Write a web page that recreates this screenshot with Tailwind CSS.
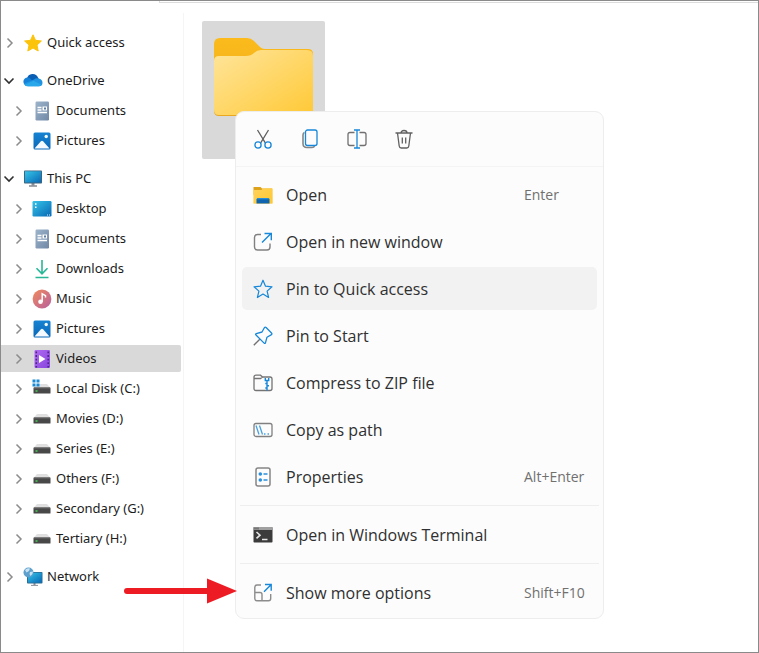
<!DOCTYPE html>
<html lang="en">
<head>
    <meta charset="utf-8">
    <meta name="viewport" content="width=device-width, initial-scale=1">
    <title>Videos</title>
    <script src="https://cdn.jsdelivr.net/npm/@tailwindcss/browser@4"></script>
</head>
<body class="bg-white font-['Open_Sans',sans-serif]">

<!-- shared icons -->
<svg class="absolute size-0">
    <defs>
        <linearGradient id="g-doc" x1="0" y1="0" x2="1" y2="1"><stop offset="0" stop-color="#9db4cb"/><stop offset="1" stop-color="#7088a6"/></linearGradient>
        <linearGradient id="g-pic" x1="0" y1="0" x2="0" y2="1"><stop offset="0" stop-color="#1683d2"/><stop offset="1" stop-color="#0a68b8"/></linearGradient>
        <linearGradient id="g-screen" x1="0" y1="0" x2="1" y2="1"><stop offset="0" stop-color="#35c5e8"/><stop offset="1" stop-color="#0868b5"/></linearGradient>
        <linearGradient id="g-music" x1="0" y1="0" x2="1" y2="1"><stop offset="0" stop-color="#f08a5c"/><stop offset="1" stop-color="#b8609f"/></linearGradient>
        <linearGradient id="g-video" x1="0" y1="0" x2="1" y2="1"><stop offset="0" stop-color="#b06af0"/><stop offset="1" stop-color="#8746dd"/></linearGradient>
        <linearGradient id="g-folder" x1="0" y1="0" x2="1" y2="1"><stop offset="0" stop-color="#ffe59b"/><stop offset="1" stop-color="#ffc936"/></linearGradient>
        <linearGradient id="g-tab" x1="0" y1="0" x2="0" y2="1"><stop offset="0" stop-color="#fcbb1b"/><stop offset=".7" stop-color="#efae1e"/><stop offset="1" stop-color="#e9a820"/></linearGradient>
    </defs>
    <symbol id="right" viewBox="0 0 18 18"><path d="M6.500 4.500l4.500 4.500-4.500 4.500" fill="none" stroke="#8c8c8c" stroke-width="1.500"/></symbol>
    <symbol id="down" viewBox="0 0 18 18"><path d="M3.500 6.500l4.500 4.500 4.500-4.500" fill="none" stroke="#303030" stroke-width="1.600"/></symbol>
    <symbol id="doc" viewBox="0 0 20 20">
        <rect x="3.500" y=".5" width="13.500" height="19" rx="1.200" fill="url(#g-doc)"/>
        <path d="M5.500 6.500h4M5.500 9h4M5.500 11.500h9.500" stroke="#fff" stroke-width="1.300"/>
        <rect x="10.500" y="5.500" width="4.500" height="4" fill="#fff"/><rect x="12" y="6.500" width="2" height="2" fill="#5f7d9d"/>
    </symbol>
    <symbol id="pic" viewBox="0 0 20 20">
        <rect x="1.500" y="1.500" width="17" height="17" rx="1.500" fill="url(#g-pic)"/>
        <path d="M2.500 17.500l6.200-7q1.300-1.400 2.600 0l6.200 7z" fill="#f4faff"/>
        <circle cx="14.200" cy="5.500" r="1.700" fill="#f4faff"/>
    </symbol>
    <symbol id="drive" viewBox="0 0 20 20">
        <path d="M5 5h10l3.500 4h-17z" fill="#e0e0e0"/>
        <rect x="1.500" y="8.500" width="17" height="6" rx=".5" fill="#484848"/>
        <path d="M2 9h16" stroke="#686868"/>
        <path d="M3.500 12h2" stroke="#47d052" stroke-width="1.500"/>
    </symbol>
</svg>

<div class="relative flex min-h-screen border border-[#8a8a8a]">
    <!-- edge of the address bar -->
    <div class="absolute top-0 right-0 left-[158px] h-[2px] border-b border-l border-[#dcdcdc]"></div>

    <nav class="w-[180px] shrink-0 pt-7 font-['Noto_Sans',sans-serif] text-[13px] text-[#1c1c1c]">
        <ul class="flex flex-col gap-[11px]">
            <li>
                <a href="#" class="flex h-[27px] items-center gap-1">
                    <svg class="size-[18px]"><use href="#right"/></svg>
                    <svg class="size-5" viewBox="0 0 20 20"><path d="M10 1.800l2.500 5.500 5.900.7-4.400 4 1.200 6-5.200-3-5.200 3L6 12 1.600 8l5.900-.7z" fill="#fcc30b" stroke="#fcc30b" stroke-linejoin="round"/></svg>
                    <span>Quick access</span>
                </a>
            </li>
            <li class="flex flex-col gap-[3px]">
                <a href="#" class="flex h-[27px] items-center gap-1">
                    <svg class="size-[18px]"><use href="#down"/></svg>
                    <svg class="size-5" viewBox="0 0 20 20">
                        <path d="M4 7.500A5.800 5.800 0 0 1 15 6.500l1.500 3L8 13 2 9z" fill="#0a5fb5"/>
                        <circle cx="4.600" cy="10.800" r="4.200" fill="#1480d8"/>
                        <path d="M11 8.500q2-2 4.500-1 4 .8 4 4.200 0 3.500-3.500 3.500H5q-3 0-4-2.700z" fill="#1f93e0"/>
                        <path d="M1.700 13.700L10.500 9.800l8 4q-.8 1.400-2.500 1.400H5q-2 0-3.300-1.500z" fill="#28a8ea"/>
                    </svg>
                    <span>OneDrive</span>
                </a>
                <ul class="flex flex-col gap-[3px]">
                    <li><a href="#" class="flex h-[27px] items-center gap-1 pl-[9px]"><svg class="size-[18px]"><use href="#right"/></svg><svg class="size-5"><use href="#doc"/></svg><span>Documents</span></a></li>
                    <li><a href="#" class="flex h-[27px] items-center gap-1 pl-[9px]"><svg class="size-[18px]"><use href="#right"/></svg><svg class="size-5"><use href="#pic"/></svg><span>Pictures</span></a></li>
                </ul>
            </li>
            <li class="flex flex-col gap-[3px]">
                <a href="#" class="flex h-[27px] items-center gap-1">
                    <svg class="size-[18px]"><use href="#down"/></svg>
                    <svg class="size-5" viewBox="0 0 20 20">
                        <path d="M8.500 14h3v2.500h-3z" fill="#8a9199"/><path d="M6 17h8" stroke="#6f7780" stroke-width="1.300"/>
                        <rect x="1" y="1.500" width="18" height="13" rx=".8" fill="#3d6480"/><rect x="2" y="2.300" width="16" height="11.200" fill="url(#g-screen)"/>
                    </svg>
                    <span>This PC</span>
                </a>
                <ul class="flex flex-col gap-[3px]">
                    <li><a href="#" class="flex h-[27px] items-center gap-1 pl-[9px]">
                        <svg class="size-[18px]"><use href="#right"/></svg>
                        <svg class="size-5" viewBox="0 0 20 20"><rect x=".5" y="2" width="19" height="15.500" rx="1.200" fill="url(#g-screen)"/><path d="M3 5h1.500M3 8.300h1.500" stroke="#fff" stroke-width="1.500"/><path d="M15 16h1m1 0h1" stroke="#d7efff"/></svg>
                        <span>Desktop</span></a></li>
                    <li><a href="#" class="flex h-[27px] items-center gap-1 pl-[9px]"><svg class="size-[18px]"><use href="#right"/></svg><svg class="size-5"><use href="#doc"/></svg><span>Documents</span></a></li>
                    <li><a href="#" class="flex h-[27px] items-center gap-1 pl-[9px]">
                        <svg class="size-[18px]"><use href="#right"/></svg>
                        <svg class="size-5" viewBox="0 0 20 20" fill="none" stroke="#27b797" stroke-width="1.600"><path d="M10 1v13.500M4.500 9.300l5.500 5.500 5.500-5.500M3.500 18.500h13"/></svg>
                        <span>Downloads</span></a></li>
                    <li><a href="#" class="flex h-[27px] items-center gap-1 pl-[9px]">
                        <svg class="size-[18px]"><use href="#right"/></svg>
                        <svg class="size-5" viewBox="0 0 20 20"><circle cx="10" cy="10" r="9.400" fill="url(#g-music)"/><circle cx="8.500" cy="12.800" r="2.300" fill="#fff"/><path d="M10.200 13V4.800l3.300 1.800v2" fill="none" stroke="#fff" stroke-width="1.500"/></svg>
                        <span>Music</span></a></li>
                    <li><a href="#" class="flex h-[27px] items-center gap-1 pl-[9px]"><svg class="size-[18px]"><use href="#right"/></svg><svg class="size-5"><use href="#pic"/></svg><span>Pictures</span></a></li>
                    <li><a href="#" aria-current="page" class="flex h-[27px] items-center gap-1 rounded-r-[2px] bg-[#d9d9d9] pl-[9px]">
                        <svg class="size-[18px]"><use href="#right"/></svg>
                        <svg class="size-5" viewBox="0 0 20 20"><rect x="2.500" y="1" width="15.500" height="18" rx="1.200" fill="url(#g-video)"/><path d="M4.300 2.500v16M16.200 2.500v16" stroke="#4b2484" stroke-width="1.500" stroke-dasharray="1.800 1.800"/><path d="M7 6v8l6.500-4z" fill="#fff"/></svg>
                        <span>Videos</span></a></li>
                    <li><a href="#" class="flex h-[27px] items-center gap-1 pl-[9px]">
                        <svg class="size-[18px]"><use href="#right"/></svg>
                        <svg class="size-5" viewBox="0 0 20 20"><use href="#drive"/><path d="M.5.500h3v3h-3zM4.500.500h3v3h-3zM.5 4.500h3v3h-3zM4.500 4.500h3v3h-3z" fill="#1b8ad6"/></svg>
                        <span>Local Disk (C:)</span></a></li>
                    <li><a href="#" class="flex h-[27px] items-center gap-1 pl-[9px]"><svg class="size-[18px]"><use href="#right"/></svg><svg class="size-5"><use href="#drive"/></svg><span>Movies (D:)</span></a></li>
                    <li><a href="#" class="flex h-[27px] items-center gap-1 pl-[9px]"><svg class="size-[18px]"><use href="#right"/></svg><svg class="size-5"><use href="#drive"/></svg><span>Series (E:)</span></a></li>
                    <li><a href="#" class="flex h-[27px] items-center gap-1 pl-[9px]"><svg class="size-[18px]"><use href="#right"/></svg><svg class="size-5"><use href="#drive"/></svg><span>Others (F:)</span></a></li>
                    <li><a href="#" class="flex h-[27px] items-center gap-1 pl-[9px]"><svg class="size-[18px]"><use href="#right"/></svg><svg class="size-5"><use href="#drive"/></svg><span>Secondary (G:)</span></a></li>
                    <li><a href="#" class="flex h-[27px] items-center gap-1 pl-[9px]"><svg class="size-[18px]"><use href="#right"/></svg><svg class="size-5"><use href="#drive"/></svg><span>Tertiary (H:)</span></a></li>
                </ul>
            </li>
            <li>
                <a href="#" class="flex h-[27px] items-center gap-1">
                    <svg class="size-[18px]"><use href="#right"/></svg>
                    <svg class="size-5" viewBox="0 0 20 20">
                        <path d="M10.500 16h2v2h-2z" fill="#8a9199"/><path d="M8 18.400h7" stroke="#8a9199"/>
                        <rect x="4" y="5" width="15.500" height="11.500" rx=".8" fill="#2c6d94"/><rect x="5" y="5.800" width="13.700" height="9.800" fill="url(#g-screen)"/>
                        <circle cx="5.500" cy="5.500" r="5" fill="#5d9fcd"/><path d="M2 3q2-2.500 5-1.500L6 4 3.500 5.500zM7 5l3-.5q0 3-2.500 4.500L6.500 7z" fill="#c8e2f2"/>
                    </svg>
                    <span>Network</span>
                </a>
            </li>
        </ul>
    </nav>

    <main class="relative mt-3 ml-[2px] flex-1 border-l border-[#f5f5f5] pt-2 pl-[18px]">
        <button type="button" aria-label="Folder" class="flex h-[138px] w-[123px] justify-center rounded-[2px] bg-[#d9d9d9] pt-4">
            <svg class="h-[80px] w-[101px]" viewBox="0 0 101 80">
                <path d="M1 7q0-6 6-6h27q4 0 7 3l6 6q2 2 5 2h43q5 0 5 5v57q0 5-5 5H6q-5 0-5-5z" fill="url(#g-tab)"/>
                <path d="M1 24q0-5 5-5h27q5 0 8-3 3-3 7-3h46q6 0 6 6v54q0 5-5 5H6q-5 0-5-5z" fill="url(#g-folder)"/>
            </svg>
        </button>

        <!-- context menu -->
        <div role="menu" class="absolute top-[98px] left-[51px] w-[369px] rounded-[9px] border border-[#ededed] bg-[#fcfcfc] pb-1 text-base text-[#303030]">
            <div class="flex h-[55px] items-center gap-[6px] border-b border-[#f4f4f4] px-[6px]">
                <button type="button" aria-label="Cut" class="flex size-[41px] items-center justify-center">
                    <svg class="size-5" viewBox="0 0 20 20" fill="none" stroke-width="1.300"><path d="M4.500 1l7.800 12.800M15.500 1L7.700 13.800" stroke="#606060"/><circle cx="5" cy="16" r="3.100" stroke="#1687d9"/><circle cx="15" cy="16" r="3.100" stroke="#1687d9"/></svg>
                </button>
                <button type="button" aria-label="Copy" class="flex size-[41px] items-center justify-center">
                    <svg class="size-5" viewBox="0 0 20 20" fill="none" stroke-width="1.300"><path d="M4.500 3.500Q3 4 3 6v8.500q0 4 4 4h5q2 0 2.500-1.500" stroke="#858585" stroke-width="1.600"/><rect x="5.500" y="1" width="11.500" height="15.500" rx="2" stroke="#1687d9"/></svg>
                </button>
                <button type="button" aria-label="Rename" class="flex size-[41px] items-center justify-center">
                    <svg class="size-5" viewBox="0 0 20 20" fill="none" stroke-width="1.300"><path d="M7.500 3.500H3q-2 0-2 2v9q0 2 2 2h4.500M12.500 3.500H17q2 0 2 2v9q0 2-2 2h-4.500" stroke="#707070"/><path d="M7 1h6M7 19h6M10 1v18" stroke="#1687d9"/></svg>
                </button>
                <button type="button" aria-label="Delete" class="flex size-[41px] items-center justify-center">
                    <svg class="size-5" viewBox="0 0 20 20" fill="none" stroke="#606060" stroke-width="1.300"><path d="M1.500 4h17M7 4q0-2.500 3-2.500T13 4M3.500 4l1.700 13q.3 2 2 2h5.600q1.700 0 2-2L16.500 4M8.300 8.500v6M11.700 8.500v6"/></svg>
                </button>
            </div>

            <div class="flex flex-col gap-1 px-[6px] pt-[6px]">
                <button type="button" role="menuitem" class="flex h-[43px] items-center gap-[13px] rounded-[5px] pl-[11px] text-left">
                    <svg class="size-5" viewBox="0 0 20 20"><path d="M.5 2h7l1.500 1.500h10V10H.5z" fill="#dda11a"/><path d="M.5 5h8L10 3.500h9.500v15H.5z" fill="url(#g-folder)"/><path d="M.5 5h8L10 3.500h9.500v15H.5z" fill="#ffc72e" fill-opacity=".6"/><path d="M3.500 18.500v-4q0-1.500 1.500-1.500h10q1.500 0 1.500 1.500v4z" fill="#0f64b0"/><path d="M4 13.700h12" stroke="#2a95e0" stroke-width="1.200"/></svg>
                    <span class="flex-1">Open</span>
                    <kbd class="w-[73px] font-['Open_Sans',sans-serif] text-sm text-[#707070]">Enter</kbd>
                </button>
                <button type="button" role="menuitem" class="flex h-[43px] items-center gap-[13px] rounded-[5px] pl-[11px] text-left">
                    <svg class="size-5" viewBox="0 0 20 20" fill="none" stroke-width="1.400"><path d="M8 2.500H4.500q-3 0-3 3V15q0 3 3 3H14q3 0 3-3v-3.500" stroke="#808080"/><path d="M9 10.500l9-9M11.500 1.500h6.800v6.800" stroke="#1687d9"/></svg>
                    <span>Open in new window</span>
                </button>
                <button type="button" role="menuitem" class="flex h-[43px] items-center gap-[13px] rounded-[5px] bg-[#f2f2f2] pl-[11px] text-left">
                    <svg class="size-5" viewBox="0 0 20 20" fill="none" stroke="#1687d9" stroke-width="1.200" stroke-linejoin="round"><path d="M10 1.200l2.500 6 6.500.6-4.900 4.300 1.500 6.400-5.600-3.400-5.600 3.400 1.500-6.400L1 7.800l6.500-.6z"/></svg>
                    <span>Pin to Quick access</span>
                </button>
                <button type="button" role="menuitem" class="flex h-[43px] items-center gap-[13px] rounded-[5px] pl-[11px] text-left">
                    <svg class="size-5" viewBox="0 0 20 20" fill="none" stroke-width="1.300" stroke-linejoin="round"><path d="M.8 19.200l6-6" stroke="#707070"/><path d="M11.500 1.500q.8-.8 1.600 0L18.500 7q.8.800 0 1.600L14 11.200l-1.500 5.500q-.4 1.300-1.400.4L3 9q-1-1 .3-1.400L9 6z" stroke="#1687d9"/></svg>
                    <span>Pin to Start</span>
                </button>
                <button type="button" role="menuitem" class="flex h-[43px] items-center gap-[13px] rounded-[5px] pl-[11px] text-left">
                    <svg class="size-5" viewBox="0 0 20 20" fill="none" stroke-width="1.300"><path d="M1 5.500V4q0-1.800 2-1.800h4.500L9.500 4H17q2 0 2 2v9.500q0 2-2 2H3q-2 0-2-2V5.500h6.500L9.500 4" stroke="#747474"/><path d="M12.300 5v2.500h3.400V5M14 7.500v10M12.300 10.500H14M14 12.800h2M12.300 15H14" stroke="#1687d9" stroke-width="1.400"/></svg>
                    <span>Compress to ZIP file</span>
                </button>
                <button type="button" role="menuitem" class="flex h-[43px] items-center gap-[13px] rounded-[5px] pl-[11px] text-left">
                    <svg class="size-5" viewBox="0 0 20 20" fill="none" stroke-width="1.300"><rect x="1" y="3.500" width="18" height="13" rx="2" stroke="#808080"/><path d="M3 5.500l3 9M6.500 5.500l3 9M11 14h1.500M14.500 14H16" stroke="#4aa1e2"/></svg>
                    <span>Copy as path</span>
                </button>
                <button type="button" role="menuitem" class="flex h-[43px] items-center gap-[13px] rounded-[5px] pl-[11px] text-left">
                    <svg class="size-5" viewBox="0 0 20 20" fill="none" stroke-width="1.500"><rect x="3" y="1" width="14" height="18" rx="2" stroke="#858585"/><path d="M10.500 7h4M10.500 13h4" stroke="#2a8fdc"/><circle cx="7.300" cy="7" r="1.800" fill="#2a8fdc"/><circle cx="7.300" cy="13" r="1.800" fill="#2a8fdc"/></svg>
                    <span class="flex-1">Properties</span>
                    <kbd class="w-[73px] font-['Open_Sans',sans-serif] text-sm text-[#707070]">Alt+Enter</kbd>
                </button>
            </div>
            <hr class="mx-1 my-[7px] border-[#eeeeee]">
            <div class="flex flex-col px-[6px]">
                <button type="button" role="menuitem" class="flex h-[43px] items-center gap-[13px] rounded-[5px] pl-[11px] text-left">
                    <svg class="size-5" viewBox="0 0 20 20"><rect x=".5" y="2" width="19" height="15.500" rx=".8" fill="#3b3b3b"/><path d="M.5 5V2.800q0-.8.800-.8h17.400q.8 0 .8.800V5z" fill="#a0a0a0"/><path d="M1 3.500h5" stroke="#777" stroke-width="2"/><path d="M3.500 7l3.500 3.200-3.500 3.200M9 14.500h5.500" fill="none" stroke="#e5e5e5" stroke-width="1.600"/></svg>
                    <span>Open in Windows Terminal</span>
                </button>
            </div>
            <hr class="mx-1 my-[7px] border-[#eeeeee]">
            <div class="flex flex-col px-[6px]">
                <button type="button" role="menuitem" class="flex h-[43px] items-center gap-[13px] rounded-[5px] pl-[11px] text-left">
                    <svg class="size-5" viewBox="0 0 20 20" fill="none" stroke-width="1.400"><path d="M8 2H4q-2.200 0-2.200 2.200v11.300q0 2.200 2.200 2.200h11.500q2.200 0 2.200-2.200V11M1.800 9.500H7q2 0 2 2v6" stroke="#8c8c8c"/><path d="M11 8.700l7-7M12 1.500h6.200v6.200" stroke="#1687d9"/></svg>
                    <span class="flex-1">Show more options</span>
                    <kbd class="w-[73px] font-['Open_Sans',sans-serif] text-sm text-[#707070]">Shift+F10</kbd>
                </button>
            </div>
        </div>

        <!-- arrow pointing at "Show more options" -->
        <svg class="absolute top-[565px] -left-[60px] h-[26px] w-[113px]" viewBox="0 0 113 26">
            <path d="M3 13h82" stroke="#ed1c24" stroke-width="6" stroke-linecap="round"/>
            <path d="M83 .5L113 13 83 25.500z" fill="#ed1c24"/>
        </svg>
    </main>
</div>

</body>
</html>
